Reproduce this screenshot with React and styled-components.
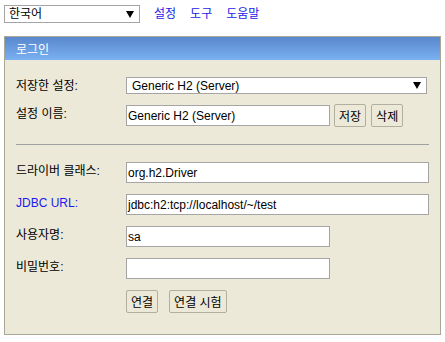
import React from 'react';
import styled, { createGlobalStyle } from 'styled-components';

const GlobalStyle = createGlobalStyle`
  body {
    margin: 0;
    background: #ffffff;
    font-family: "Liberation Sans", Arial, "Noto Sans CJK KR", sans-serif;
    font-size: 12px;
    color: #000000;
  }
`;

const Page = styled.div`
  padding: 5px 4px 0 4px;
  width: 437px;
`;

const TopBar = styled.div`
  display: flex;
  align-items: center;
  height: 18px;
`;

const SelectBox = styled.div`
  box-sizing: border-box;
  width: ${(p) => p.$width};
  height: ${(p) => p.$height || '18px'};
  border: 1px solid #a5a5a5;
  background: #ffffff;
  display: flex;
  align-items: center;
  justify-content: space-between;
  padding: 0 5px 0 ${(p) => p.$indent || '4px'};
  font-size: 12px;
  line-height: 14px;
  white-space: nowrap;
`;

const Arrow = () => (
  <svg width="8" height="7" viewBox="0 0 8 7">
    <polygon points="0,0 8,0 4,7" fill="#000000" />
  </svg>
);

const NavLinks = styled.div`
  display: flex;
  gap: 14px;
  margin-left: 14px;
`;

const NavLink = styled.a`
  color: #1a1ae6;
  text-decoration: none;
  font-size: 12px;
  line-height: 14px;
`;

const Panel = styled.div`
  margin-top: 13px;
  border: 1px solid #a9a795;
  background: #ece9d8;
`;

const PanelHeader = styled.div`
  height: 23px;
  padding-left: 11px;
  display: flex;
  align-items: center;
  color: #ffffff;
  font-size: 12px;
  background: linear-gradient(#5a87cd, #79b1f1);
`;

const PanelBody = styled.div`
  padding: 17px 11px 21px 11px;
  display: flex;
  flex-direction: column;
`;

const FormRow = styled.div`
  display: flex;
  align-items: ${(p) => (p.$center ? 'center' : 'flex-start')};
  margin-top: ${(p) => p.$top || '0px'};
`;

const Label = styled.div`
  width: 110px;
  flex: none;
  padding-top: ${(p) => p.$pad || '2px'};
  font-size: 12px;
  line-height: 14px;
  color: ${(p) => (p.$link ? '#1a1aee' : '#000000')};
`;

const TextInput = styled.div`
  box-sizing: border-box;
  width: ${(p) => p.$width};
  height: 21px;
  margin-top: ${(p) => p.$top || '0px'};
  border: 1px solid #a5a5a5;
  background: #ffffff;
  padding-left: 1px;
  display: flex;
  align-items: center;
  font-size: 12px;
  white-space: nowrap;
`;

const Button = styled.div`
  box-sizing: border-box;
  height: 23px;
  padding: 0 4px;
  margin-left: ${(p) => p.$left || '0px'};
  border: 1px solid #b2afa0;
  border-radius: 2px;
  background: #ece9d8;
  display: flex;
  align-items: center;
  font-size: 12px;
  white-space: nowrap;
`;

const Divider = styled.div`
  height: 1px;
  background: #a0a0a0;
  margin-top: 17px;
`;

export default function App() {
  return (
    <Page>
      <GlobalStyle />
      <TopBar>
        <SelectBox $width="136px">
          <span>한국어</span>
          <Arrow />
        </SelectBox>
        <NavLinks>
          <NavLink href="#">설정</NavLink>
          <NavLink href="#">도구</NavLink>
          <NavLink href="#">도움말</NavLink>
        </NavLinks>
      </TopBar>
      <Panel>
        <PanelHeader>로그인</PanelHeader>
        <PanelBody>
          <FormRow $center>
            <Label $pad="0px">저장한 설정:</Label>
            <SelectBox $width="301px" $height="17px" $indent="5px">
              <span>Generic H2 (Server)</span>
              <Arrow />
            </SelectBox>
          </FormRow>
          <FormRow $top="10px">
            <Label $pad="3px">설정 이름:</Label>
            <TextInput $width="204px" $top="1px">Generic H2 (Server)</TextInput>
            <Button $left="4px">저장</Button>
            <Button $left="5px">삭제</Button>
          </FormRow>
          <Divider />
          <FormRow $top="17px">
            <Label>드라이버 클래스:</Label>
            <TextInput $width="304px">org.h2.Driver</TextInput>
          </FormRow>
          <FormRow $top="11px">
            <Label $link>JDBC URL:</Label>
            <TextInput $width="304px">jdbc:h2:tcp://localhost/~/test</TextInput>
          </FormRow>
          <FormRow $top="11px">
            <Label>사용자명:</Label>
            <TextInput $width="204px">sa</TextInput>
          </FormRow>
          <FormRow $top="11px">
            <Label>비밀번호:</Label>
            <TextInput $width="204px" />
          </FormRow>
          <FormRow $top="11px">
            <Label />
            <Button>연결</Button>
            <Button $left="11px">연결 시험</Button>
          </FormRow>
        </PanelBody>
      </Panel>
    </Page>
  );
}
